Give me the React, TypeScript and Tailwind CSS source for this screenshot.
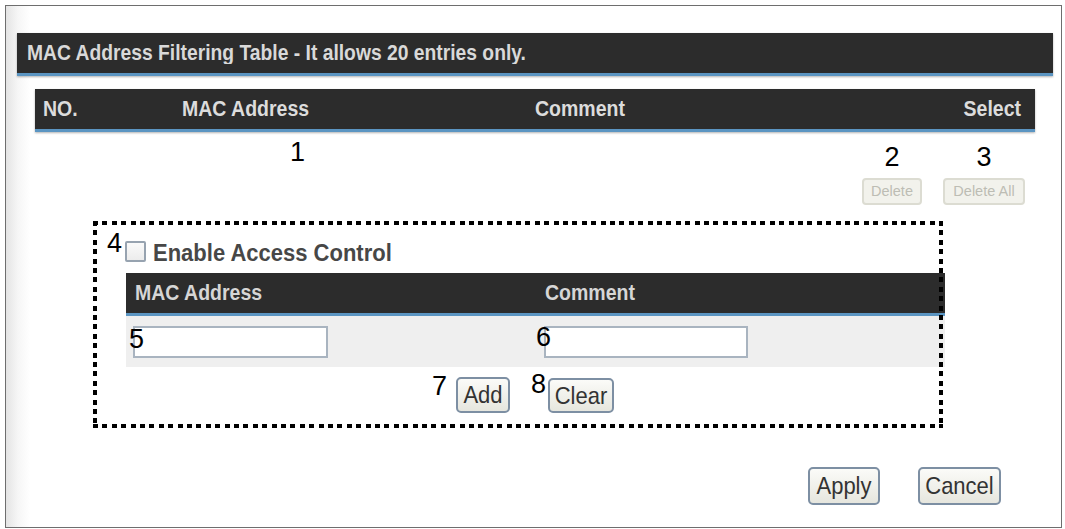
import React from "react";

const font = { fontFamily: '"Liberation Sans", Arial, sans-serif' };

function Num({ children, className = "" }: { children: React.ReactNode; className?: string }) {
  return (
    <span className={`block text-[27px] leading-[27px] text-black ${className}`}>{children}</span>
  );
}

function Btn({ children, className = "" }: { children: React.ReactNode; className?: string }) {
  return (
    <button
      className={`flex items-center justify-center border-2 border-[#7d8fa3] rounded-[5px] bg-[linear-gradient(#fbfbf8,#e6e6de)] text-[#333] text-[22px] leading-none ${className}`}
    >
      <span className="inline-block scale-y-[1.1]">{children}</span>
    </button>
  );
}

function DisabledBtn({ children, className = "" }: { children: React.ReactNode; className?: string }) {
  return (
    <button
      className={`flex items-center justify-center border-2 border-[#dcdcd2] rounded-[4px] bg-[#f2f2ec] text-[#bdbdb4] text-[14.5px] leading-none ${className}`}
    >
      {children}
    </button>
  );
}

export default function App() {
  return (
    <div className="w-[1065px] h-[529px] bg-white overflow-hidden pt-[5px] pl-[5px]" style={font}>
      <div className="w-[1057px] h-[523px] border border-[#6e6e6e] bg-[linear-gradient(90deg,#e4e4e4_0px,#f6f6f6_12px,#ffffff_24px)]">
        {/* Title bar */}
        <div className="mt-[27px] ml-[11px] w-[1036px] h-[43px] bg-[#2c2c2c] border-b-[3px] border-[#5b95c2] flex items-center pl-[10px] shadow-[0_1px_2px_rgba(0,0,0,0.3)]">
          <span className="inline-block scale-y-[1.1] text-[19.3px] font-bold text-[#d9d9d9]">
            MAC Address Filtering Table - It allows 20 entries only.
          </span>
        </div>

        {/* Header row */}
        <div className="mt-[13px] ml-[29px] w-[1000px] h-[43px] bg-[#2c2c2c] border-b-[3px] border-[#5b95c2] flex items-center text-[19.5px] font-bold text-[#dcdcdc] shadow-[0_1px_2px_rgba(0,0,0,0.3)]">
          <span className="w-[147px] pl-[8px] scale-y-[1.1]">NO.</span>
          <span className="w-[353px] scale-y-[1.1]">MAC Address</span>
          <span className="scale-y-[1.1]">Comment</span>
          <span className="ml-auto pr-[14px] scale-y-[1.1]">Select</span>
        </div>

        {/* Numbers + delete buttons */}
        <div className="ml-[29px] w-[1000px] h-[89px] flex">
          <Num className="ml-[255px] mt-[7px]">1</Num>
          <div className="ml-auto mr-[10px] flex gap-[21px] pt-[12px]">
            <div className="flex flex-col items-center">
              <Num>2</Num>
              <DisabledBtn className="mt-[7px] w-[60px] h-[27px]">Delete</DisabledBtn>
            </div>
            <div className="flex flex-col items-center">
              <Num>3</Num>
              <DisabledBtn className="mt-[7px] w-[82px] h-[27px]">Delete All</DisabledBtn>
            </div>
          </div>
        </div>

        {/* Dotted box */}
        <div className="relative ml-[87px] w-[850px] h-[207px] pt-[9px] after:content-[''] after:absolute after:inset-0 after:pointer-events-none after:[background:repeating-linear-gradient(90deg,#000_0_5px,transparent_5px_9.4px)_top_left/100%_4px_no-repeat,repeating-linear-gradient(90deg,#000_0_5px,transparent_5px_9.4px)_bottom_left/100%_4px_no-repeat,repeating-linear-gradient(180deg,#000_0_5px,transparent_5px_9.4px)_top_left/4px_100%_no-repeat,repeating-linear-gradient(180deg,#000_0_5px,transparent_5px_9.4px)_top_right/4px_100%_no-repeat]">
          {/* Checkbox row */}
          <div className="h-[43px] flex items-start ml-[14px]">
            <Num className="w-[18px]">4</Num>
            <span className="mt-[11px] w-[21px] h-[21px] border-2 border-[#97a3b0] bg-[linear-gradient(#fafafa,#ececec)] rounded-[2px]" />
            <span className="mt-[10px] ml-[7px] text-[22px] leading-[26px] font-bold text-[#474747] scale-y-[1.08]">
              Enable Access Control
            </span>
          </div>

          {/* Inner table */}
          <div className="ml-[33px] w-[819px]">
            <div className="h-[43px] bg-[#2c2c2c] border-b-[3px] border-[#5b95c2] flex items-center text-[19.5px] font-bold text-[#d6d6d6]">
              <span className="w-[419px] pl-[9px] scale-y-[1.1]">MAC Address</span>
              <span className="scale-y-[1.1]">Comment</span>
            </div>
            <div className="h-[51px] bg-[#efefef] flex items-start pt-[10px]">
              <div className="relative ml-[7px]">
                <div className="w-[195px] h-[32px] border-2 border-[#a9b4c0] bg-white" />
                <Num className="absolute left-[-4px] top-[0px]">5</Num>
              </div>
              <div className="relative ml-[216px]">
                <div className="w-[204px] h-[32px] border-2 border-[#a9b4c0] bg-white" />
                <Num className="absolute left-[-8px] top-[-2px]">6</Num>
              </div>
            </div>
          </div>

          {/* Add / Clear row */}
          <div className="flex items-start ml-[339px]">
            <Num className="mt-[6px] w-[17px]">7</Num>
            <Btn className="mt-[10px] ml-[7px] w-[54px] h-[36px]">Add</Btn>
            <Num className="mt-[4px] ml-[21px] w-[17px]">8</Num>
            <Btn className="mt-[11px] w-[66px] h-[35px]">Clear</Btn>
          </div>
        </div>

        {/* Apply / Cancel */}
        <div className="mt-[39px] ml-[802px] flex gap-[38px]">
          <Btn className="w-[72px] h-[38px]">Apply</Btn>
          <Btn className="w-[83px] h-[38px]">Cancel</Btn>
        </div>
      </div>
    </div>
  );
}
